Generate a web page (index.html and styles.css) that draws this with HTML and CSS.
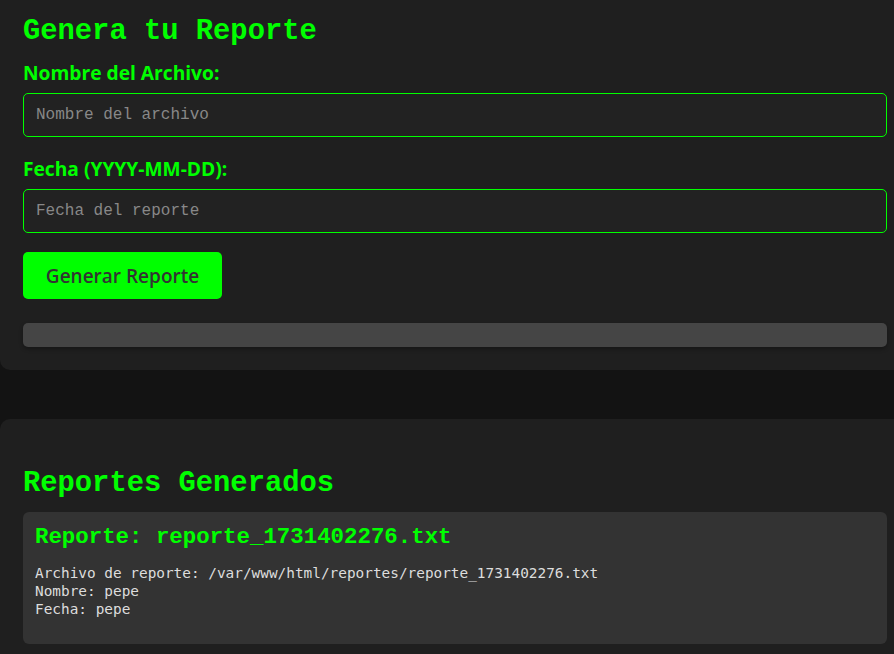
FILE: index.html
```html
<!DOCTYPE html>
<html lang="es">
<head>
<meta charset="utf-8">
<title>Generador de Reportes</title>
<link rel="stylesheet" href="styles.css">
</head>
<body>
<div class="page">
  <section class="panel panel--form">
    <h2 class="panel-title panel-title--form">Genera tu Reporte</h2>
    <form class="report-form">
      <label class="field-label" for="nombre">Nombre del Archivo:</label>
      <input class="field-input" id="nombre" type="text" placeholder="Nombre del archivo">
      <label class="field-label field-label--spaced" for="fecha">Fecha (YYYY-MM-DD):</label>
      <input class="field-input" id="fecha" type="text" placeholder="Fecha del reporte">
      <button class="submit-btn" type="button">Generar Reporte</button>
    </form>
    <div class="progress"></div>
  </section>
  <section class="panel panel--list">
    <h2 class="panel-title panel-title--list">Reportes Generados</h2>
    <article class="report-card">
      <h3 class="report-title">Reporte: reporte_1731402276.txt</h3>
      <pre class="report-body">Archivo de reporte: /var/www/html/reportes/reporte_1731402276.txt
Nombre: pepe
Fecha: pepe</pre>
    </article>
  </section>
</div>
</body>
</html>
```

FILE: styles.css
```css
html, body {
  margin: 0;
  padding: 0;
  background: #131313;
  overflow: hidden;
}

.page {
  width: 910px;
  display: flex;
  flex-direction: column;
  gap: 49px;
}

.panel {
  background: #1f1f1f;
  border-radius: 10px;
  padding: 23px;
}

.panel--form {
  padding-top: 15px;
  border-top-left-radius: 0;
  border-top-right-radius: 0;
}

.panel--list {
  padding-top: 48px;
}

.panel-title {
  font-family: "Liberation Mono", "Courier New", monospace;
  font-weight: 700;
  font-size: 28.8px;
  line-height: 33px;
  color: #00ff00;
  margin: 0;
}

.panel-title--form {
  margin-bottom: 13px;
}

.panel-title--list {
  margin-bottom: 12px;
}

.report-form {
  display: flex;
  flex-direction: column;
  align-items: flex-start;
}

.field-label {
  font-family: "Open Sans", "Noto Sans", sans-serif;
  font-weight: 700;
  font-size: 19.2px;
  line-height: 24px;
  color: #00ff00;
  margin-bottom: 8px;
}

.field-label--spaced {
  margin-top: 20px;
}

.field-input {
  box-sizing: border-box;
  width: 100%;
  height: 44px;
  padding: 0 12px;
  background: #222222;
  border: 1px solid #00ff00;
  border-radius: 5px;
  font-family: "Liberation Mono", "Courier New", monospace;
  font-size: 16px;
  color: #dddddd;
  outline: none;
}

.field-input::placeholder {
  color: #888888;
}

.submit-btn {
  margin-top: 19px;
  width: 199px;
  height: 47px;
  padding: 0 20px;
  border: none;
  border-radius: 5px;
  background: #00ff00;
  color: #333333;
  font-family: "Open Sans", "Noto Sans", sans-serif;
  font-weight: 600;
  font-size: 19px;
  cursor: pointer;
}

.progress {
  margin-top: 24px;
  height: 24px;
  border-radius: 5px;
  background: #454545;
  box-shadow: 0 2px 4px rgba(0, 0, 0, 0.3);
}

.report-card {
  background: #333333;
  border-radius: 6px;
  padding: 12px 12px 26px;
}

.report-title {
  font-family: "Liberation Mono", "Courier New", monospace;
  font-weight: 700;
  font-size: 22.4px;
  line-height: 26px;
  color: #00ff00;
  margin: 0 0 14px;
}

.report-body {
  font-family: "DejaVu Sans Mono", monospace;
  font-size: 14.4px;
  line-height: 18px;
  color: #dddddd;
  margin: 0;
}
```
